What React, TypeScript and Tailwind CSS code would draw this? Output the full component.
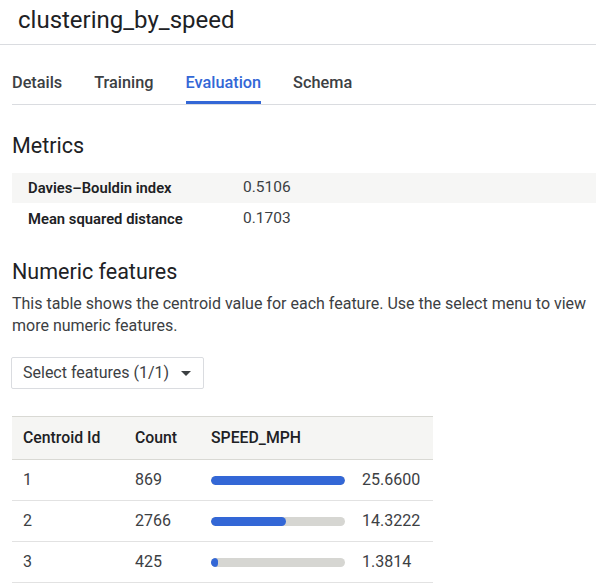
import React from "react";

const tabs = ["Details", "Training", "Evaluation", "Schema"];

const metrics = [
  { label: "Davies–Bouldin index", value: "0.5106" },
  { label: "Mean squared distance", value: "0.1703" },
];

const rows = [
  { id: 1, count: 869, speed: 25.66 },
  { id: 2, count: 2766, speed: 14.3222 },
  { id: 3, count: 425, speed: 1.3814 },
];

const maxSpeed = 25.66;

export default function App() {
  return (
    <div className="w-[596px] h-[587px] overflow-hidden bg-white text-[#202124] font-['Roboto',sans-serif]">
      {/* page header */}
      <header className="h-[45px] border-b border-[#dadce0] pl-[18px] flex items-center">
        <h1 className="text-[24px] leading-none pb-[5px]">clustering_by_speed</h1>
      </header>

      <div className="pl-[12px]">
        {/* tabs */}
        <nav className="flex gap-[32px] h-[60px] items-end border-b border-[#dadce0]">
          {tabs.map((tab) => (
            <div
              key={tab}
              className={
                tab === "Evaluation"
                  ? "text-[16.3px] font-medium text-[#3367d6] border-b-[3px] border-[#3367d6] pb-[6px]"
                  : "text-[16.3px] font-medium text-[#3c4043] border-b-[3px] border-transparent pb-[6px]"
              }
            >
              {tab}
            </div>
          ))}
        </nav>

        {/* metrics */}
        <h2 className="text-[21.5px] leading-[28px] mt-[27px] mb-[13px]">Metrics</h2>
        <div className="flex flex-col">
          {metrics.map((m, i) => (
            <div
              key={m.label}
              className={
                i === 0
                  ? "flex items-center h-[30px] bg-[#f6f6f5]"
                  : "flex items-center h-[32px]"
              }
            >
              <div className="w-[231px] pl-[16px] font-semibold text-[14.8px]">{m.label}</div>
              <div className="text-[15.5px] text-[#3c4043]">{m.value}</div>
            </div>
          ))}
        </div>

        {/* numeric features */}
        <h2 className="text-[21.5px] leading-[28px] mt-[23px]">Numeric features</h2>
        <p className="text-[16px] leading-[22px] text-[#3c4043] mt-[7px]">
          This table shows the centroid value for each feature. Use the select menu to view more
          numeric features.
        </p>

        <button className="mt-[20px] -ml-[1px] w-[193px] h-[32px] border border-[#dadce0] rounded-[2px] flex items-center justify-between pl-[11px] pr-[12px] text-[16px] text-[#3c4043]">
          <span>Select features (1/1)</span>
          <svg width="10" height="5" viewBox="0 0 10 5">
            <path d="M0 0h10L5 5z" fill="#3c4043" />
          </svg>
        </button>

        {/* centroid table */}
        <table className="mt-[27px] w-[421px] border-collapse">
          <thead>
            <tr className="h-[43px] bg-[#f5f5f3] border-y border-[#d9d9d4] text-left text-[15.8px]">
              <th className="w-[112px] pl-[11px] font-medium">Centroid Id</th>
              <th className="w-[76px] pl-[11px] font-medium">Count</th>
              <th className="pl-[11px] font-medium">SPEED_MPH</th>
            </tr>
          </thead>
          <tbody>
            {rows.map((r) => (
              <tr key={r.id} className="h-[41px] border-b border-[#e2e2e2] text-[16px] text-[#3c4043]">
                <td className="pl-[11px]">{r.id}</td>
                <td className="pl-[11px]">{r.count}</td>
                <td className="pl-[11px]">
                  <div className="flex items-center gap-[17px]">
                    <div className="w-[134px] h-[9px] rounded-full bg-[#d6d6d2] overflow-hidden">
                      <div
                        className="h-full rounded-full bg-[#3367d6]"
                        style={{ width: `${Math.max((r.speed / maxSpeed) * 100, 5)}%` }}
                      />
                    </div>
                    <span>{r.speed.toFixed(4)}</span>
                  </div>
                </td>
              </tr>
            ))}
          </tbody>
        </table>
      </div>
    </div>
  );
}
